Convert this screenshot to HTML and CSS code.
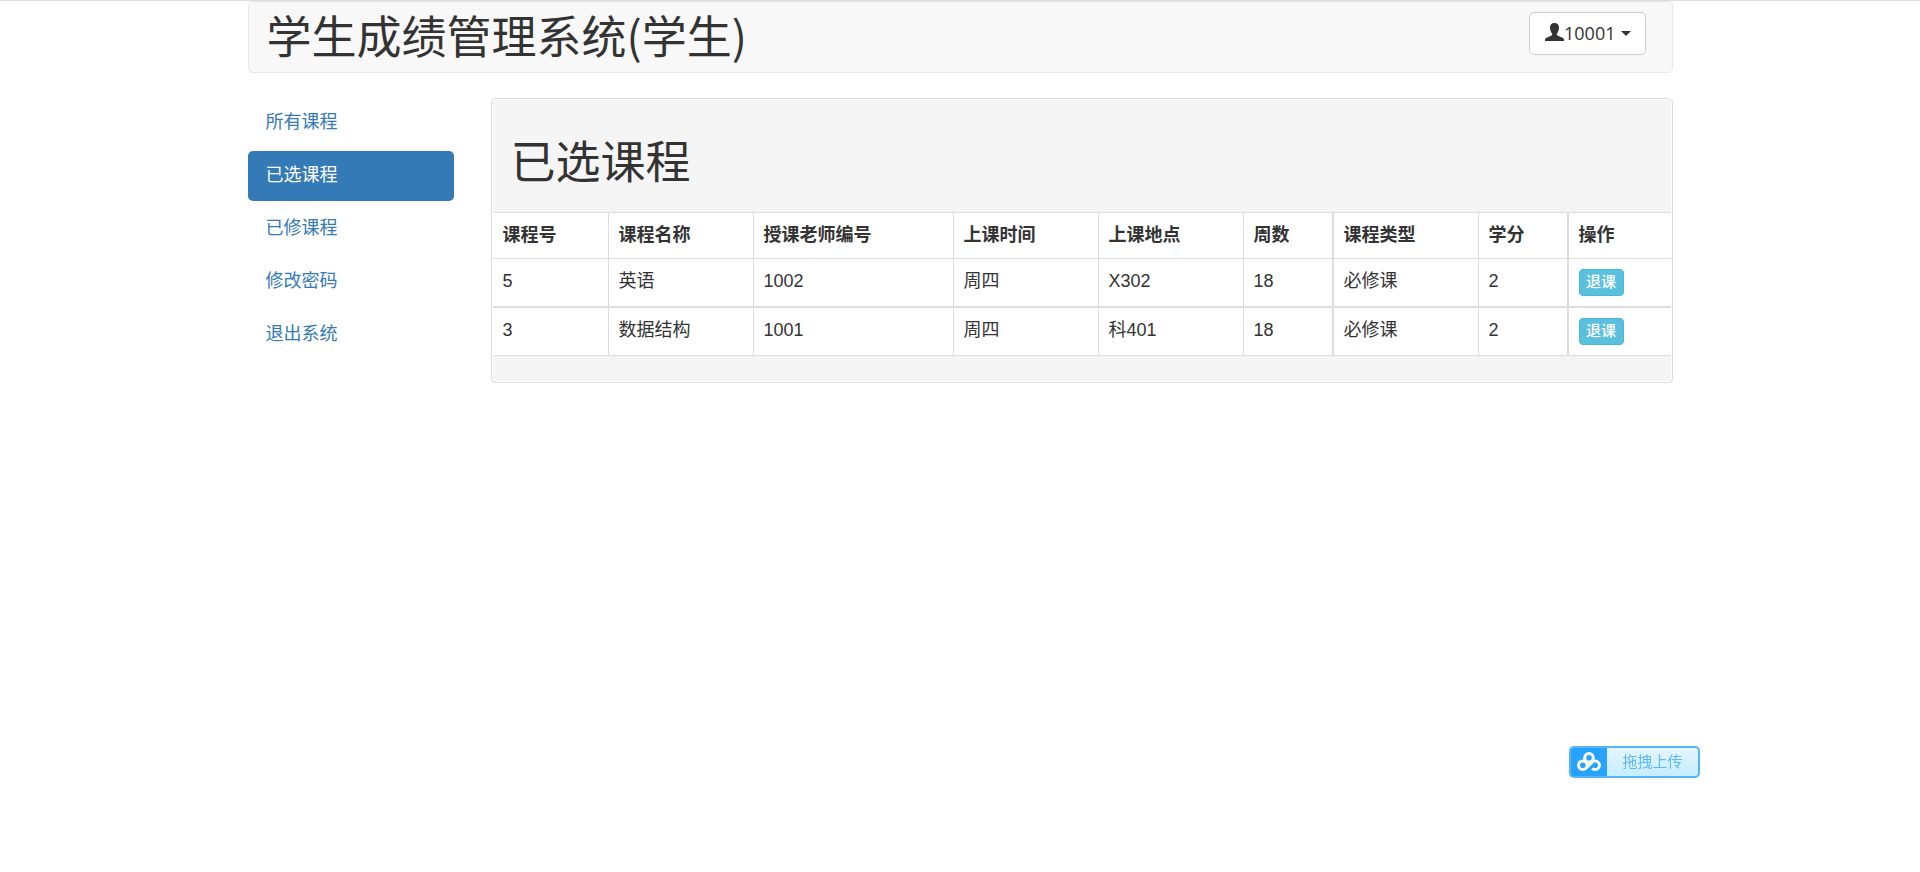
FILE: index.html
```html
<!DOCTYPE html>
<html lang="zh-CN">
<head>
    <meta charset="utf-8">
    <title>学生成绩管理系统</title>
    <link rel="stylesheet" href="styles.css">
</head>
<body>
    <div class="container">
        <header class="navbar">
            <h1>学生成绩管理系统(学生)</h1>
            <button type="button" class="btn-user">
                <svg class="icon-user" viewBox="0 0 19 18" aria-hidden="true">
                    <path d="M9.5 0C6.600 0 5 1.900 5 4.600c0 2.300.7 4.600 2 6 .4.600.2 1.500-.5 1.900L1.500 14.800C.5 15.300 0 16 0 17v1h19v-1c0-1-.5-1.700-1.500-2.200l-5-2.300c-.7-.4-.9-1.300-.5-1.900 1.300-1.400 2-3.700 2-6C14 1.900 12.400 0 9.500 0z"/>
                </svg>
                <span>10001</span>
                <span class="caret"></span>
            </button>
        </header>

        <div class="main">
            <nav class="menu">
                <a href="#">所有课程</a>
                <a href="#" class="active">已选课程</a>
                <a href="#">已修课程</a>
                <a href="#">修改密码</a>
                <a href="#">退出系统</a>
            </nav>

            <section class="panel">
                <h2>已选课程</h2>
                <table>
                    <colgroup>
                        <col class="col-no">
                        <col class="col-text">
                        <col class="col-teacher">
                        <col class="col-text">
                        <col class="col-text">
                        <col class="col-num">
                        <col class="col-text">
                        <col class="col-num">
                        <col class="col-action">
                    </colgroup>
                    <thead>
                        <tr>
                            <th>课程号</th>
                            <th>课程名称</th>
                            <th>授课老师编号</th>
                            <th>上课时间</th>
                            <th>上课地点</th>
                            <th class="wide">周数</th>
                            <th>课程类型</th>
                            <th class="wide">学分</th>
                            <th>操作</th>
                        </tr>
                    </thead>
                    <tbody>
                        <tr>
                            <td>5</td>
                            <td>英语</td>
                            <td>1002</td>
                            <td>周四</td>
                            <td>X302</td>
                            <td class="wide">18</td>
                            <td>必修课</td>
                            <td class="wide">2</td>
                            <td><button type="button" class="btn-info">退课</button></td>
                        </tr>
                        <tr>
                            <td>3</td>
                            <td>数据结构</td>
                            <td>1001</td>
                            <td>周四</td>
                            <td>科401</td>
                            <td class="wide">18</td>
                            <td>必修课</td>
                            <td class="wide">2</td>
                            <td><button type="button" class="btn-info">退课</button></td>
                        </tr>
                    </tbody>
                </table>
            </section>
        </div>
    </div>

    <button type="button" class="upload">
        <span class="upload-icon">
            <svg viewBox="0 0 24 20" aria-hidden="true">
                <circle cx="12" cy="5.800" r="4.300"/>
                <circle cx="5.800" cy="13.200" r="4.300"/>
                <path d="M9 16.200l6.200-6.100a4.300 4.300 0 1 1 0 6.200"/>
            </svg>
        </span>
        <span class="upload-text">拖拽上传</span>
    </button>
</body>
</html>
```
FILE: styles.css
```css
* { box-sizing: border-box; }
body { margin: 0; border-top: 1px solid #ddd; font: 18px/25px "Liberation Sans", "Noto Sans CJK SC", sans-serif; color: #333; background: #fff; }
h1, h2 { margin: 0; font-family: "Noto Sans CJK SC", sans-serif; font-size: 45px; line-height: 50px; font-weight: 400; }
button { font-family: inherit; cursor: pointer; }

.container { max-width: 1425px; margin: 0 auto; }
.navbar { display: flex; justify-content: space-between; align-items: flex-start; height: 72px; padding: 8px 26px 0 18px; border: 1px solid #e7e7e7; border-radius: 5px; background: #f8f8f8; }
.btn-user { display: flex; align-items: center; height: 43px; margin-top: 2px; padding: 0 14px 2px 15px; border: 1px solid #ccc; border-radius: 5px; background: #fff; color: #333; font: 18px/24px "Open Sans", "Noto Sans CJK SC", sans-serif; }
.icon-user { width: 19px; height: 18px; margin-bottom: 2px; fill: #333; }
.caret { margin: 2px 0 0 5px; border-top: 5px solid #333; border-left: 5px solid transparent; border-right: 5px solid transparent; }

.main { display: grid; grid-template-columns: 206px minmax(0, 1fr); column-gap: 37px; align-items: start; margin-top: 25px; }
.menu { display: flex; flex-direction: column; gap: 3px; }
.menu a { padding: 12px 18px 13px; border-radius: 5px; color: #337ab7; text-decoration: none; }
.menu a.active { background: #337ab7; color: #fff; }

.panel { padding: 0 1px 26px; border: 1px solid #ddd; border-radius: 5px; background: #f5f5f5; box-shadow: inset 0 0 0 1px #fff, 0 1px 1px rgba(0, 0, 0, 0.05); }
.panel h2 { padding: 36px 18px 27px; }

table { width: 100%; table-layout: fixed; border-collapse: separate; border-spacing: 0; background: #fff; }
.col-no { width: 116px; }
.col-text { width: 145px; }
.col-teacher { width: 200px; }
.col-num { width: 90px; }
.col-action { width: 102px; }
th, td { padding: 10px; text-align: left; vertical-align: top; border-right: 1px solid #ddd; border-bottom: 2px solid #ddd; }
th { border-top: 1px solid #ddd; border-bottom-width: 1px; }
td { height: 49px; }
tr:last-child td { border-bottom-width: 1px; height: 48px; }
.wide { border-right-width: 2px; }
th:last-child, td:last-child { border-right: 0; }
.btn-info { display: block; width: 45px; height: 27px; padding: 0 0 2px; border: 1px solid #46b8da; border-radius: 4px; background: #5bc0de; color: #fff; font-size: 15px; font-weight: 500; line-height: 18px; }

/* floating upload button */
.upload { position: fixed; right: 220px; bottom: 94px; display: flex; width: 131px; height: 32px; padding: 0; overflow: hidden; border: 2px solid #54b4fb; border-radius: 5px; background: linear-gradient(#e4f6ff, #c6edff); color: #62b8f6; font-size: 15px; }
.upload-icon { display: flex; align-items: center; justify-content: center; width: 36px; height: 28px; background: #26a2ff; box-shadow: 0 0 0 2px #26a2ff; clip-path: inset(-2px 0 -2px -2px); }
.upload-icon svg { width: 24px; height: 20px; fill: none; stroke: #fff; stroke-width: 3; }
.upload-text { flex: 1; line-height: 28px; }
```
